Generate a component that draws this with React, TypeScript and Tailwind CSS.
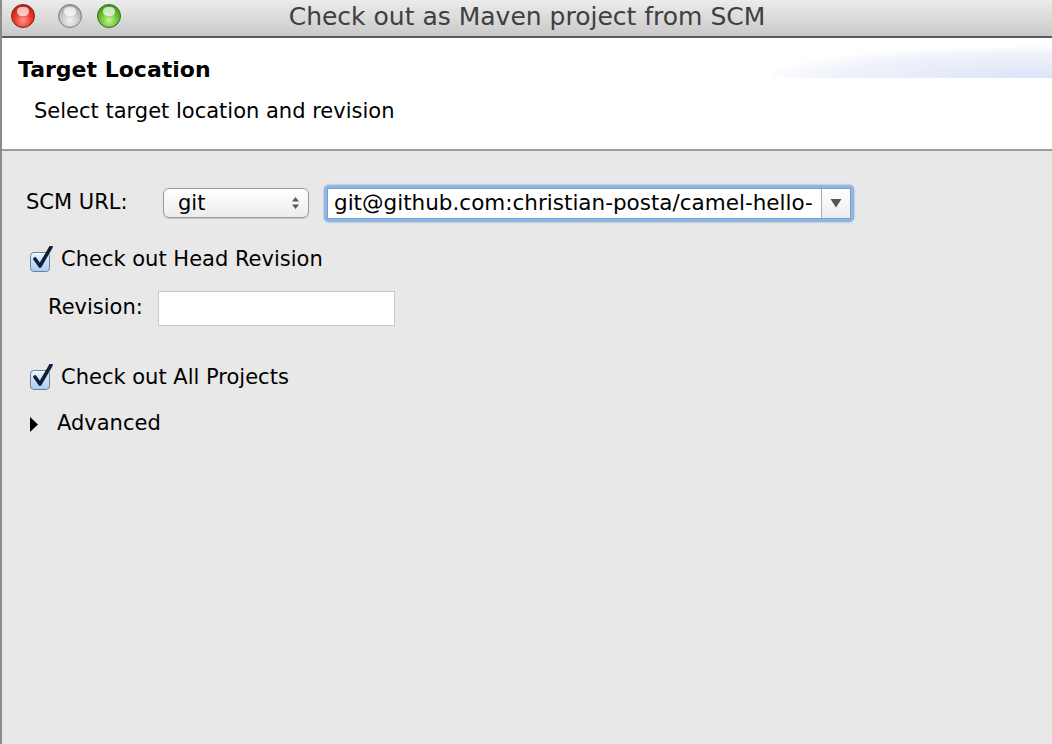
import { ReactNode } from "react";

const font = { fontFamily: '"DejaVu Sans", "Liberation Sans", sans-serif' };

function TrafficLight({ color, className = "" }: { color: "red" | "gray" | "green"; className?: string }) {
  const fills = {
    red: "bg-[radial-gradient(circle_at_50%_70%,#ff9a8a_0%,#e8382a_45%,#a8140c_100%)] border-[#8a1a12]",
    gray: "bg-[radial-gradient(circle_at_50%_70%,#f4f4f4_0%,#c4c4c4_50%,#8e8e8e_100%)] border-[#7c7c7c]",
    green: "bg-[radial-gradient(circle_at_50%_70%,#c8f59a_0%,#6cc234_45%,#347c12_100%)] border-[#2f6d14]",
  };
  return (
    <div className={`relative h-[24px] w-[24px] rounded-full border ${fills[color]} ${className}`}>
      <div className="absolute left-[5px] top-[2px] h-[9px] w-[12px] rounded-full bg-white/70" />
    </div>
  );
}

function Checkbox() {
  return (
    <div className="relative h-[22px] w-[22px]">
      <div className="absolute left-0 top-[3px] h-[20px] w-[20px] rounded-[4px] border border-[#6f7f95] bg-[linear-gradient(#eaf3fd,#a9cdf3)] shadow-[inset_0_1px_0_#fff]" />
      <svg className="absolute -top-[3px] left-[1px]" width="24" height="26" viewBox="0 0 24 26">
        <path d="M4 13 L9 20 L20 1" fill="none" stroke="#10203a" strokeWidth="3.6" strokeLinecap="round" strokeLinejoin="round" />
      </svg>
    </div>
  );
}

function Row({ children, className = "" }: { children: ReactNode; className?: string }) {
  return <div className={`flex items-center ${className}`}>{children}</div>;
}

export default function App() {
  return (
    <div className="flex h-[744px] w-[1052px] flex-col overflow-hidden border-l-2 border-[#8c8c8c] bg-[#e8e8e8] text-black" style={font}>
      {/* title bar */}
      <div className="relative flex h-[38px] shrink-0 items-center border-b-2 border-[#5a5a5a] bg-[linear-gradient(#ececec,#c9c9c9)]">
        <div className="flex items-center pb-[4px]">
          <TrafficLight color="red" className="ml-[9px]" />
          <TrafficLight color="gray" className="ml-[23px]" />
          <TrafficLight color="green" className="ml-[15px]" />
        </div>
        <div className="absolute inset-x-0 top-[1px] text-center text-[25px] leading-[32px] text-[#3f3f3f]">
          Check out as Maven project from SCM
        </div>
      </div>

      {/* header */}
      <div className="relative h-[113px] shrink-0 border-b-2 border-[#9c9c9c] bg-white">
        <div className="absolute right-0 top-0 h-[40px] w-[280px] bg-[radial-gradient(ellipse_140%_110%_at_100%_100%,#dbe3f6_0%,#eef2fb_55%,#ffffff_75%)]" />
        <div className="relative pl-[16px] pt-[18px] text-[22px] font-bold leading-[28px]">Target Location</div>
        <div className="relative pl-[32px] pt-[14px] text-[21px] leading-[26px]">Select target location and revision</div>
      </div>

      {/* body */}
      <div className="flex flex-col pl-[24px] pt-[32px] text-[21px]">
        <Row className="h-[40px]">
          <span className="w-[137px]">SCM URL:</span>
          <div className="flex h-[30px] w-[146px] items-center justify-between rounded-[6px] border border-[#9a9a9a] bg-[linear-gradient(#ffffff,#ececec)] pl-[14px] pr-[8px] shadow-[0_1px_1px_rgba(0,0,0,0.15)]">
            <span className="leading-none">git</span>
            <svg width="9" height="14" viewBox="0 0 9 14">
              <path d="M4.5 1 L8 5.5 H1 Z M4.5 13 L8 8.5 H1 Z" fill="#5a5a5a" />
            </svg>
          </div>
          <div className="ml-[15px] flex h-[37px] w-[530px] items-center rounded-[5px] bg-[#8fb6e3] p-[3px] shadow-[0_0_2px_#6b9ad6]">
            <div className="flex h-full w-full items-center border border-[#7d9fcb] bg-white">
              <span className="min-w-0 flex-1 overflow-hidden whitespace-nowrap pl-[6px] text-[21.5px] leading-none">git@github.com:christian-posta/camel-hello-</span>
              <div className="flex h-full w-[29px] shrink-0 items-center justify-center border-l border-[#aaa] bg-[linear-gradient(#ffffff,#ededed)]">
                <svg width="12" height="10" viewBox="0 0 12 10">
                  <path d="M0.5 1 H11.5 L6 9.5 Z" fill="#555" />
                </svg>
              </div>
            </div>
          </div>
        </Row>

        <Row className="mt-[24px] h-[26px] gap-[9px] pl-[4px]">
          <Checkbox />
          <span>Check out Head Revision</span>
        </Row>

        <Row className="mt-[17px] h-[36px] pl-[22px]">
          <span className="w-[110px]">Revision:</span>
          <div className="h-[35px] w-[237px] border border-[#c8c8c8] bg-white" />
        </Row>

        <Row className="mt-[39px] h-[26px] gap-[9px] pl-[4px]">
          <Checkbox />
          <span>Check out All Projects</span>
        </Row>

        <Row className="mt-[20px] h-[26px] gap-[19px] pl-[4px]">
          <svg width="8" height="15" viewBox="0 0 8 15">
            <path d="M0 0 L8 7.5 L0 15 Z" fill="#000" />
          </svg>
          <span>Advanced</span>
        </Row>
      </div>
    </div>
  );
}
